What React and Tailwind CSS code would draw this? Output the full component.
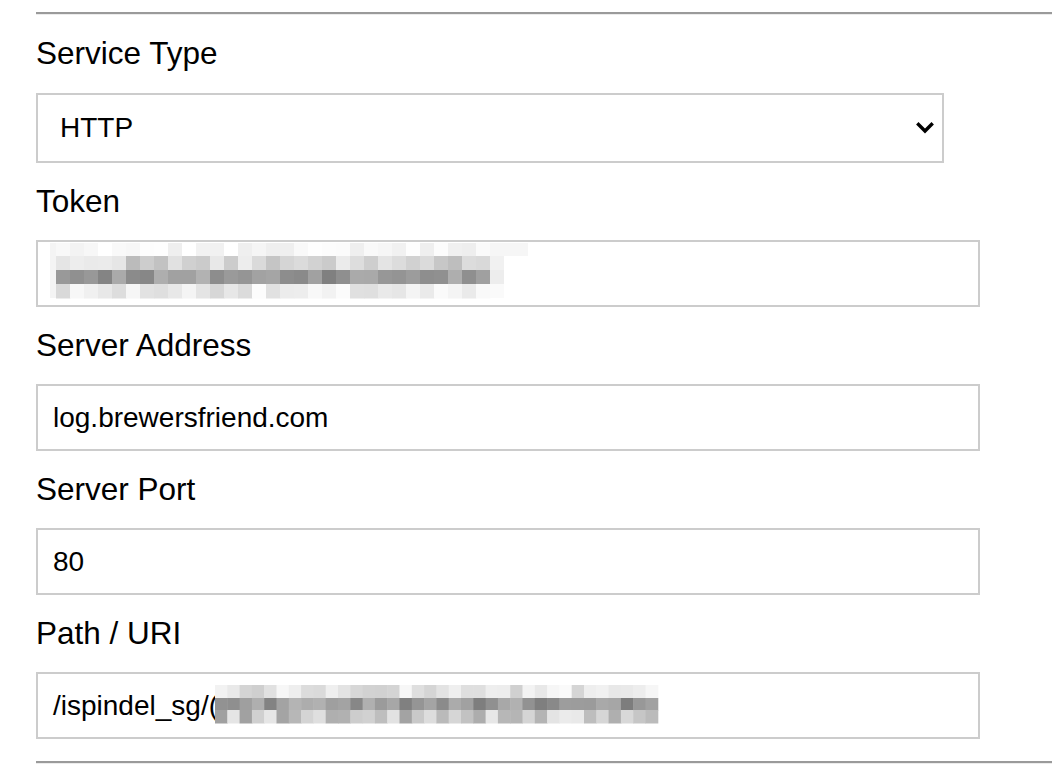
import React from 'react';

// deterministic noise for the pixelated (redacted) values
function makeRand(seed) {
  let s = seed;
  return () => {
    s = (s * 1103515245 + 12345) & 0x7fffffff;
    return s / 0x7fffffff;
  };
}

function Pixelated({ seed, cols, cell, rows, width, height, extra = [], className = '' }) {
  const rand = makeRand(seed);
  const rects = [];
  rows.forEach((row, r) => {
    for (let c = 0; c < cols; c++) {
      const v = Math.round(row.min + rand() * (row.max - row.min));
      rects.push(
        <rect key={`${r}-${c}`} x={row.x0 + c * cell} y={row.y} width={cell + 0.5} height={row.h + 0.5} fill={`rgb(${v},${v},${v})`} />
      );
    }
  });
  extra.forEach((e, i) => rects.push(<rect key={`e${i}`} {...e} />));
  return (
    <svg width={width} height={height} className={`shrink-0 block ${className}`}>
      {rects}
    </svg>
  );
}

const Rule = ({ className = '' }) => (
  <div className={`h-0 border-t-2 border-t-[#9a9a9a] border-b border-b-[#ececec] ${className}`} />
);

const Label = ({ children }) => (
  <div className="mt-[20px] h-[36px] leading-[36px] text-[31.5px] text-black">{children}</div>
);

const Field = ({ children, className = '' }) => (
  <div className={`mt-[21px] w-[944px] h-[67px] border-2 border-[#cccccc] bg-white flex items-center pl-[15px] text-[28px] text-black ${className}`}>
    {children}
  </div>
);

export default function App() {
  return (
    <div className="min-h-screen bg-white pl-[36px] pt-[12px] font-['Liberation_Sans',Arial,sans-serif]">
      <Rule />

      <Label>Service Type</Label>
      <div className="mt-[22px] w-[908px] h-[70px] border-2 border-[#cccccc] bg-white flex items-center justify-between pl-[22px] pr-[7px] text-[28px] text-black">
        <span>HTTP</span>
        <svg width="20" height="14" viewBox="0 0 20 14">
          <path d="M3.5 3.5 L10 10 L16.5 3.5" fill="none" stroke="#000" strokeWidth="3.4" strokeLinecap="square" />
        </svg>
      </div>

      <Label>Token</Label>
      <div className="mt-[21px] w-[944px] h-[67px] border-2 border-[#cccccc] bg-white flex items-start pl-[12px]">
        <Pixelated
          seed={7}
          cols={31}
          cell={14}
          width={480}
          height={63}
          rows={[
            { x0: 6, y: 1, h: 13, min: 238, max: 255 },
            { x0: 6, y: 14, h: 14, min: 185, max: 245 },
            { x0: 6, y: 28, h: 14, min: 128, max: 182 },
            { x0: 6, y: 42, h: 14, min: 215, max: 252 },
          ]}
          extra={[
            { x: 0, y: 1, width: 6, height: 55, fill: '#f4f4f4' },
            { x: 440, y: 1, width: 38, height: 13, fill: '#f6f6f6' },
            { x: 440, y: 14, width: 14, height: 14, fill: '#f1f1f1' },
            { x: 440, y: 28, width: 14, height: 14, fill: '#ededed' },
            { x: 440, y: 42, width: 14, height: 14, fill: '#fafafa' },
          ]}
        />
      </div>

      <Label>Server Address</Label>
      <Field>log.brewersfriend.com</Field>

      <Label>Server Port</Label>
      <Field>80</Field>

      <Label>Path / URI</Label>
      <Field>
        <span>/ispindel_sg/(</span>
        <Pixelated
          seed={23}
          cols={36}
          cell={12.3}
          width={450}
          height={63}
          className="-ml-[3px]"
          rows={[
            { x0: 0, y: 11, h: 13, min: 205, max: 250 },
            { x0: 0, y: 24, h: 12, min: 125, max: 180 },
            { x0: 0, y: 36, h: 13, min: 160, max: 235 },
          ]}
        />
      </Field>

      <Rule className="mt-[22px]" />
    </div>
  );
}
